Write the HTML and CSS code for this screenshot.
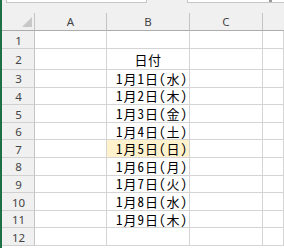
FILE: index.html
```html
<!DOCTYPE html>
<html lang="ja">
<head>
<meta charset="utf-8">
<link rel="stylesheet" href="styles.css">
</head>
<body>
<div class="edge"></div>
<div class="main">
  <div class="topbar">
    <div class="namebox"></div>
    <div class="formulabox"><span class="dd"></span></div>
  </div>
  <div class="sheet">
    <div class="corner"><span class="tri"></span></div>
    <div class="colhead">A</div>
    <div class="colhead">B</div>
    <div class="colhead">C</div>
    <div class="colhead last"></div>

    <div class="rowhead">1</div><div class="cell"></div><div class="cell"></div><div class="cell"></div><div class="cell"></div>
    <div class="rowhead">2</div><div class="cell"></div><div class="cell center">日付</div><div class="cell"></div><div class="cell"></div>
    <div class="rowhead">3</div><div class="cell"></div><div class="cell date">1月1日(水)</div><div class="cell"></div><div class="cell"></div>
    <div class="rowhead">4</div><div class="cell"></div><div class="cell date">1月2日(木)</div><div class="cell"></div><div class="cell"></div>
    <div class="rowhead">5</div><div class="cell"></div><div class="cell date">1月3日(金)</div><div class="cell"></div><div class="cell"></div>
    <div class="rowhead">6</div><div class="cell"></div><div class="cell date">1月4日(土)</div><div class="cell"></div><div class="cell"></div>
    <div class="rowhead">7</div><div class="cell"></div><div class="cell date hl">1月5日(日)</div><div class="cell"></div><div class="cell"></div>
    <div class="rowhead">8</div><div class="cell"></div><div class="cell date">1月6日(月)</div><div class="cell"></div><div class="cell"></div>
    <div class="rowhead">9</div><div class="cell"></div><div class="cell date">1月7日(火)</div><div class="cell"></div><div class="cell"></div>
    <div class="rowhead">10</div><div class="cell"></div><div class="cell date">1月8日(水)</div><div class="cell"></div><div class="cell"></div>
    <div class="rowhead">11</div><div class="cell"></div><div class="cell date">1月9日(木)</div><div class="cell"></div><div class="cell"></div>
    <div class="rowhead">12</div><div class="cell"></div><div class="cell"></div><div class="cell"></div><div class="cell"></div>
  </div>
</div>
</body>
</html>
```

FILE: styles.css
```css
html, body {
  margin: 0;
  padding: 0;
}
body {
  width: 284px;
  height: 248px;
  overflow: hidden;
  display: flex;
  background: #f0f0f0;
}
.edge {
  width: 2px;
  flex: none;
  background: #1e7145;
}
.main {
  flex: 1;
  display: flex;
  flex-direction: column;
  min-width: 0;
}
.topbar {
  height: 13px;
  flex: none;
  display: flex;
  align-items: flex-start;
}
.namebox {
  margin-left: 4px;
  width: 141px;
  height: 3px;
  box-sizing: border-box;
  background: #fff;
  border: 1px solid #c6c6c6;
  border-top: none;
}
.formulabox {
  margin-left: 40px;
  flex: 1;
  height: 3px;
  box-sizing: border-box;
  background: #fff;
  border: 1px solid #c6c6c6;
  border-top: none;
  border-right: none;
  display: flex;
  justify-content: flex-end;
}
.dd {
  width: 3px;
  height: 2px;
  margin-right: 12px;
  background: #9a9a9a;
}
.sheet {
  flex: 1;
  display: grid;
  grid-template-columns: 33px 72px 83px 73px 1fr;
  grid-template-rows: 18px 18.3px 20.8px repeat(10, 17.6px);
  background: #fff;
}
.sheet > div {
  box-sizing: border-box;
  border-right: 1px solid #d4d4d4;
  border-bottom: 1px solid #d4d4d4;
  min-width: 0;
}
.corner {
  background: #f0f0f0;
  position: relative;
  border-right-color: #c4c4c4 !important;
  border-bottom-color: #acacac !important;
}
.tri {
  position: absolute;
  right: 2px;
  bottom: 3px;
  width: 0;
  height: 0;
  border-left: 10px solid transparent;
  border-bottom: 10px solid #c8c8c8;
}
.colhead {
  background: #f0f0f0;
  border-right-color: #c4c4c4 !important;
  border-bottom-color: #acacac !important;
  display: flex;
  align-items: center;
  justify-content: center;
  font-family: "Noto Sans", "DejaVu Sans", sans-serif;
  font-size: 11.5px;
  color: #444;
  line-height: 12px;
  padding-top: 1px;
}
.colhead.last {
  border-right: none;
}
.rowhead {
  background: #f0f0f0;
  border-right-color: #c4c4c4 !important;
  border-bottom-color: #d0d0d0 !important;
  display: flex;
  align-items: center;
  justify-content: center;
  font-family: "Noto Sans", "DejaVu Sans", sans-serif;
  font-size: 11.5px;
  color: #444;
  line-height: 12px;
  padding-top: 2px;
  padding-left: 1px;
}
.cell {
  display: flex;
  align-items: center;
  font-family: "Noto Sans CJK JP", sans-serif;
  font-feature-settings: "hwid" 1;
  font-size: 13px;
  line-height: 13px;
  color: #000;
  white-space: nowrap;
}
.cell.center {
  justify-content: center;
  letter-spacing: 0.5px;
}
.cell.date {
  justify-content: flex-end;
  padding-right: 1px;
  letter-spacing: 1px;
}
.cell.hl {
  background: #fff2cc;
}
```
